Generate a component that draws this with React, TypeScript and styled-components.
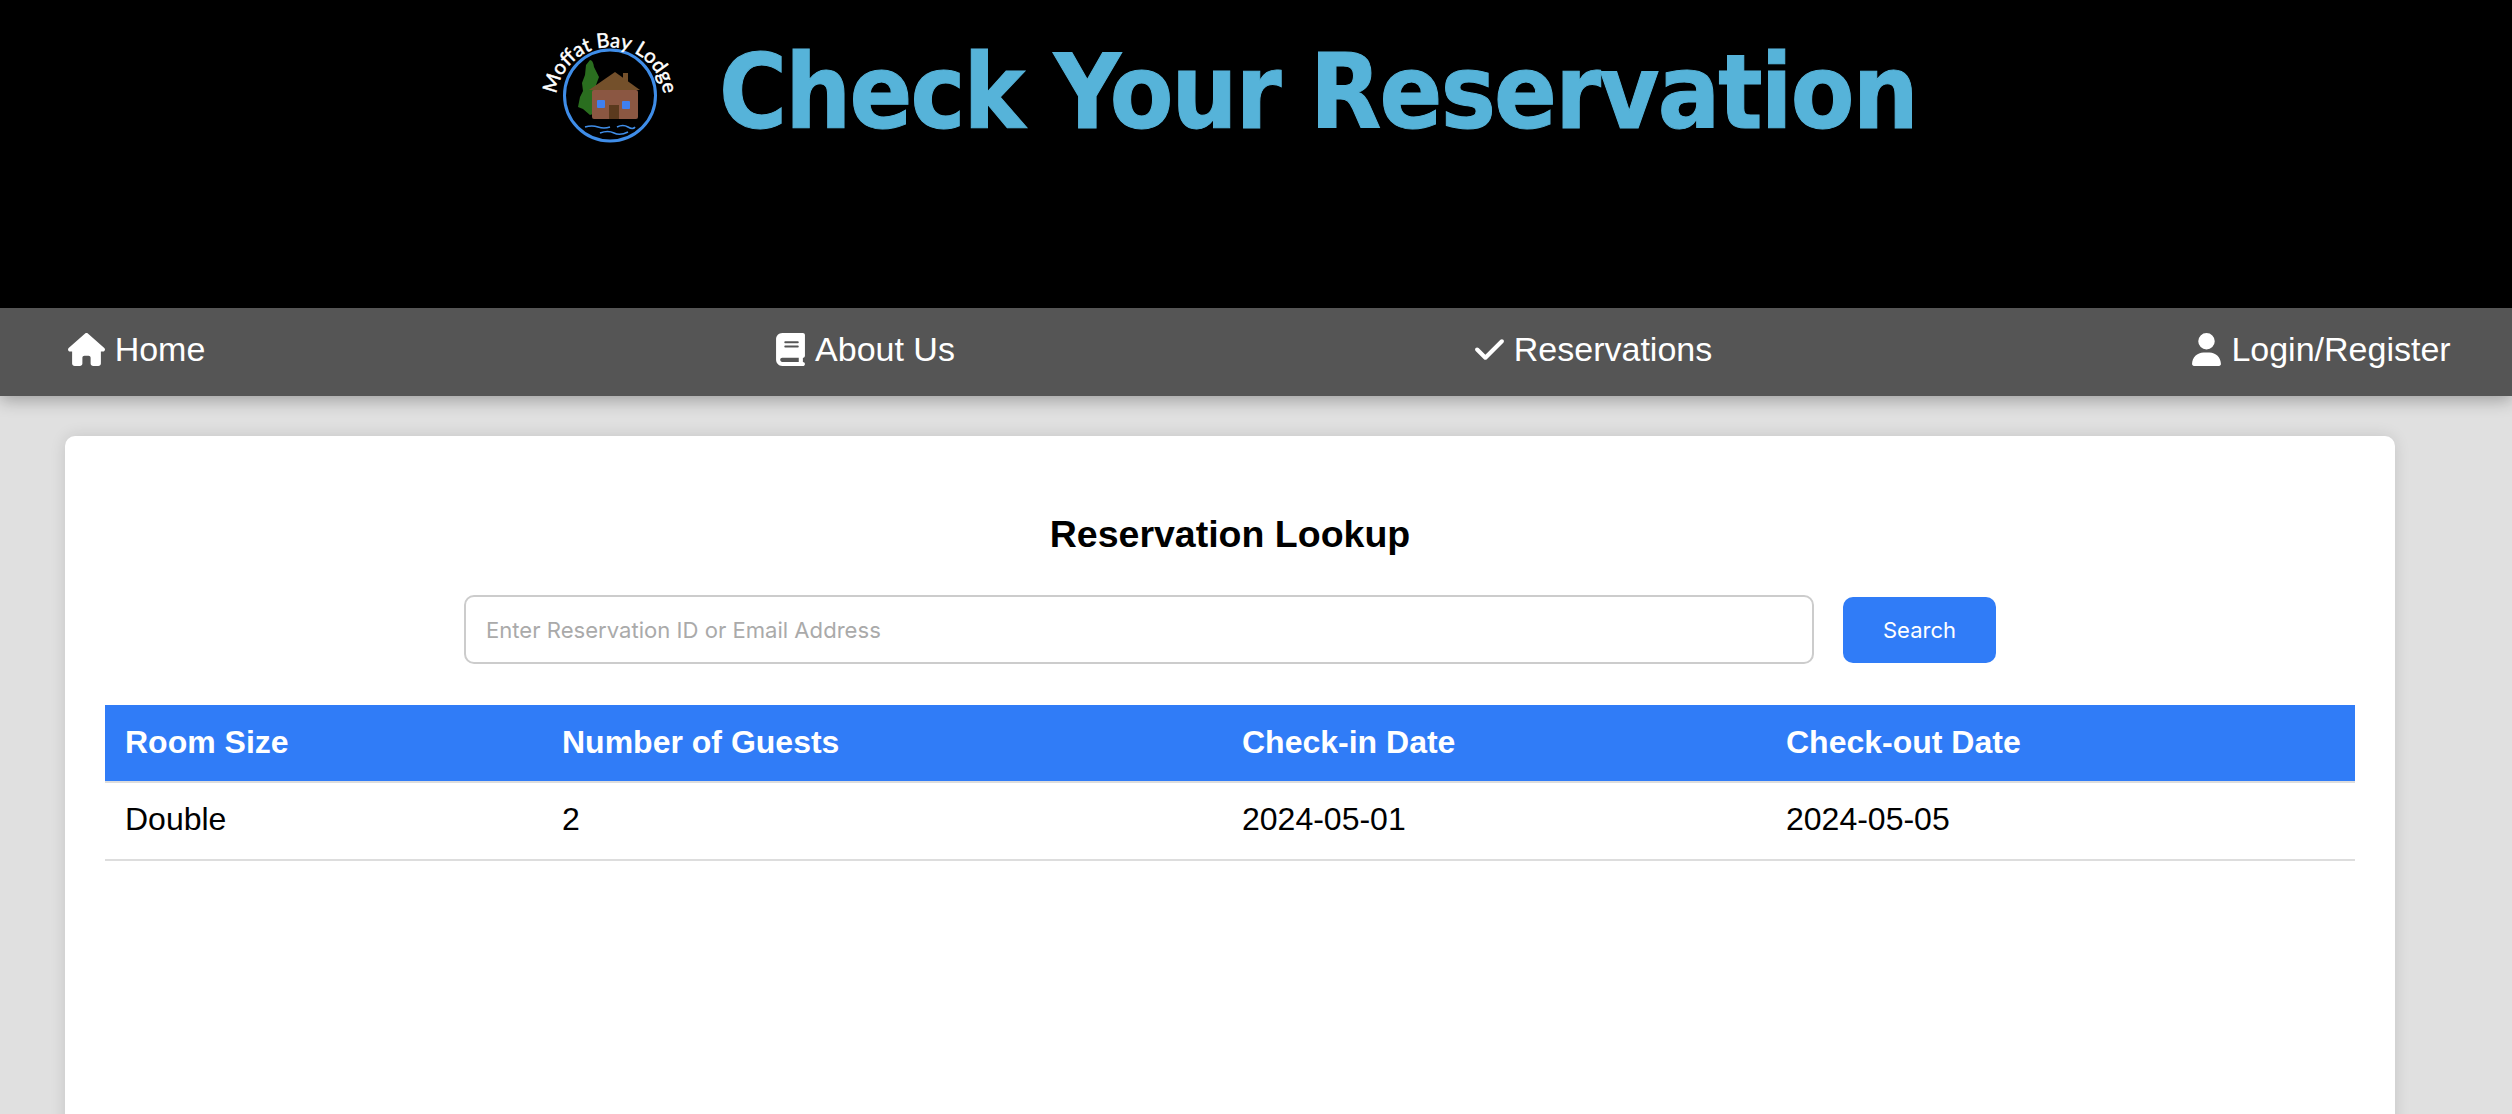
import React from 'react';
import styled, { createGlobalStyle } from 'styled-components';
import { FaHouse, FaBook, FaCheck, FaUser } from 'react-icons/fa6';

const GlobalStyle = createGlobalStyle`
  html, body {
    margin: 0;
    padding: 0;
    height: 100%;
    overflow: hidden;
    background-color: #e0e0e0;
    font-family: "Liberation Sans", Arial, sans-serif;
  }
`;

const Header = styled.header`
  height: 308px;
  background-color: #000;
  display: flex;
  align-items: flex-start;
  box-sizing: border-box;
  padding: 25px 0 0 540px;
  gap: 39px;
`;

const LogoSvg = styled.svg`
  width: 140px;
  height: 120px;
  flex: none;
  overflow: visible;
`;

const Title = styled.h1`
  margin: -1px 0 0;
  font-family: "DejaVu Sans Condensed", "DejaVu Sans", Verdana, sans-serif;
  font-size: 103px;
  font-weight: 700;
  line-height: 136px;
  letter-spacing: -1.8px;
  -webkit-text-stroke: 1px #56b3d9;
  color: #56b3d9;
  white-space: nowrap;
`;

const Nav = styled.nav`
  height: 88px;
  box-sizing: border-box;
  background-color: #555;
  display: grid;
  grid-template-columns: repeat(4, 260px);
  column-gap: 468px;
  justify-items: center;
  align-items: center;
  padding: 0 0 6px 6.5px;
  box-shadow: 0 4px 16px rgba(0, 0, 0, 0.3);
  position: relative;
`;

const NavItem = styled.a`
  display: flex;
  align-items: center;
  gap: 8px;
  color: #fff;
  font-size: 34px;
  text-decoration: none;

  svg {
    width: auto;
    height: 33px;
    flex: none;
  }
`;

const HomeIcon = styled(FaHouse)`
  && {
    height: 37px;
    margin-right: 2px;
  }
`;

const Card = styled.main`
  margin: 40px 117px 0 65px;
  height: 800px;
  background-color: #fff;
  border-radius: 10px;
  padding: 40px;
  box-shadow: 0 0 16px rgba(0, 0, 0, 0.12);
`;

const Heading = styled.h2`
  margin: 36px 0 39px;
  text-align: center;
  font-size: 37.5px;
  line-height: 44px;
  font-weight: 700;
  color: #000;
`;

const SearchForm = styled.form`
  display: flex;
  justify-content: center;
  align-items: center;
  gap: 29px;
  margin-bottom: 41px;
`;

const SearchInput = styled.input`
  width: 1350px;
  height: 69px;
  box-sizing: border-box;
  border: 2px solid #ccc;
  border-radius: 10px;
  padding: 0 20px;
  font-family: Inter, sans-serif;
  font-size: 22.1px;
  background: #fff;

  &::placeholder {
    color: #aaa;
  }
`;

const SearchButton = styled.button`
  width: 153px;
  height: 66px;
  border: none;
  border-radius: 10px;
  background-color: #307cf7;
  color: #fff;
  font-family: Inter, sans-serif;
  font-size: 22px;
`;

const Table = styled.table`
  width: 2250px;
  border-collapse: separate;
  border-spacing: 0;
  table-layout: fixed;
`;

const HeadCell = styled.th<{ $width: number }>`
  width: ${props => props.$width}px;
  height: 78px;
  padding: 0 20px 2px;
  box-sizing: border-box;
  text-align: left;
  font-size: 32px;
  font-weight: 700;
  color: #fff;
  background-color: #307cf7;
  border-bottom: 2px solid #ddd;
`;

const Cell = styled.td`
  height: 78px;
  padding: 0 20px 3px;
  box-sizing: border-box;
  font-size: 32px;
  color: #000;
  border-bottom: 2px solid #ddd;
`;

const Logo: React.FC = () => (
  <LogoSvg viewBox="0 0 140 120">
    <defs>
      <path id="logoArc" d="M 17.8 90 A 54 54 0 1 1 122.2 90" />
    </defs>
    <circle cx="70" cy="70.5" r="45.5" fill="none" stroke="#3f8de8" strokeWidth="3" />
    <text fill="#fff" stroke="#fff" strokeWidth="0.5" fontFamily="Lato, sans-serif" fontSize="20">
      <textPath href="#logoArc" startOffset="50%" textAnchor="middle">Moffat Bay Lodge</textPath>
    </text>
    {/* tree */}
    <path d="M50 35 Q53 35 54 42 L59 52 L56 60 L56 88 L50 90 L43 84 L38 82 L40 72 L43 66 L42 58 L45 50 L46 40 Z" fill="#2a6e1f" />
    {/* cabin */}
    <rect x="52" y="65" width="46" height="29" rx="2" fill="#8b5742" />
    <rect x="83" y="48" width="5" height="10" fill="#74502b" />
    <path d="M49 65 L75 47 L100 65 Z" fill="#74502b" />
    <rect x="57" y="75" width="8" height="8" rx="1" fill="#3f80f0" />
    <rect x="82" y="76" width="8" height="8" rx="1" fill="#3f80f0" />
    <rect x="69" y="80" width="10" height="14" fill="#5b3a1e" />
    {/* water */}
    <path d="M45 102 Q52 100 58 102 T70 102 M77 102 Q83 99 88 102 T95 102 M60 108 Q68 105 74 108 T88 107" stroke="#3f8de8" strokeWidth="1.6" fill="none" />
  </LogoSvg>
);

const App: React.FC = () => {
  return (
    <>
      <GlobalStyle />
      <Header>
        <Logo />
        <Title>Check Your Reservation</Title>
      </Header>
      <Nav>
        <NavItem href="#"><HomeIcon />Home</NavItem>
        <NavItem href="#"><FaBook />About Us</NavItem>
        <NavItem href="#"><FaCheck />Reservations</NavItem>
        <NavItem href="#"><FaUser />Login/Register</NavItem>
      </Nav>
      <Card>
        <Heading>Reservation Lookup</Heading>
        <SearchForm>
          <SearchInput placeholder="Enter Reservation ID or Email Address" />
          <SearchButton type="button">Search</SearchButton>
        </SearchForm>
        <Table>
          <thead>
            <tr>
              <HeadCell $width={437}>Room Size</HeadCell>
              <HeadCell $width={680}>Number of Guests</HeadCell>
              <HeadCell $width={544}>Check-in Date</HeadCell>
              <HeadCell $width={589}>Check-out Date</HeadCell>
            </tr>
          </thead>
          <tbody>
            <tr>
              <Cell>Double</Cell>
              <Cell>2</Cell>
              <Cell>2024-05-01</Cell>
              <Cell>2024-05-05</Cell>
            </tr>
          </tbody>
        </Table>
      </Card>
    </>
  );
};

export default App;
